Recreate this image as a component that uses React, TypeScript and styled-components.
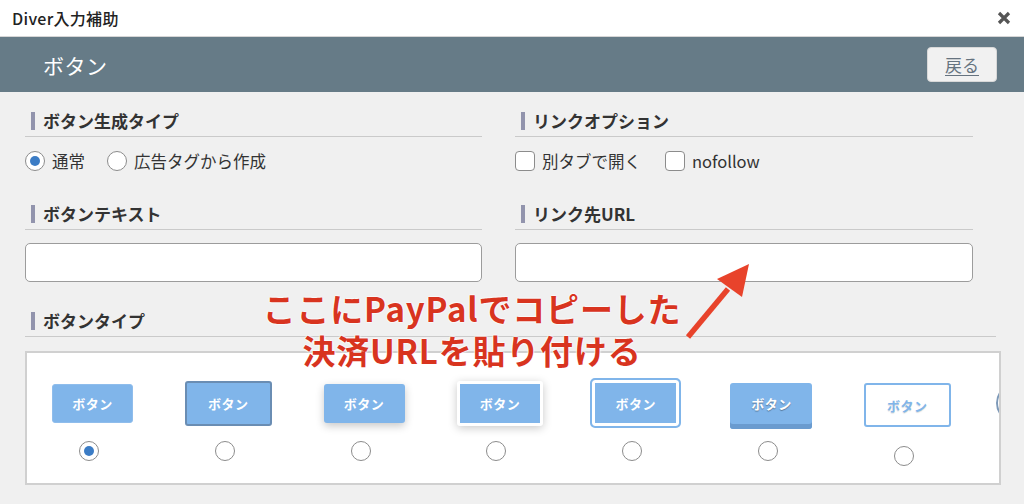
import styled, { createGlobalStyle, css } from "styled-components";

const GlobalStyle = createGlobalStyle`
  html, body, #root {
    margin: 0;
    padding: 0;
    height: 100%;
  }
  body {
    font-family: "Noto Sans CJK JP", "Noto Sans", sans-serif;
    color: #333;
    background: #f0f0f0;
  }
  * {
    box-sizing: border-box;
  }
`;

const Dialog = styled.div`
  width: 1024px;
  height: 504px;
  display: flex;
  flex-direction: column;
  overflow: hidden;
  background: #f0f0f0;
`;

const TitleBar = styled.div`
  height: 37px;
  flex-shrink: 0;
  display: flex;
  align-items: center;
  justify-content: space-between;
  padding: 0 13px 0 12px;
  background: #fff;
  border-bottom: 1px solid #d6d6d6;
`;

const Title = styled.div`
  font-size: 16px;
  font-weight: 500;
  color: #222;
  letter-spacing: 0.3px;
`;

const CloseButton = styled.div`
  width: 14px;
  height: 14px;
  display: flex;
`;

const Header = styled.div`
  height: 55px;
  flex-shrink: 0;
  display: flex;
  align-items: center;
  justify-content: space-between;
  padding: 0 27px 0 43px;
  background: #667b87;
`;

const HeaderTitle = styled.div`
  font-size: 21px;
  color: #fff;
  letter-spacing: 0.5px;
`;

const BackButton = styled.div`
  width: 70px;
  height: 35px;
  display: flex;
  align-items: center;
  justify-content: center;
  background: #f1f1f1;
  border: 1px solid #d8d8d8;
  border-radius: 4px;
  font-size: 17px;
  color: #66737f;
  text-decoration: underline;
  text-underline-offset: 3px;
`;

const Body = styled.div`
  position: relative;
  flex: 1;
  padding: 17px 23px 0 25px;
`;

const Columns = styled.div`
  display: grid;
  grid-template-columns: 457px 458px;
  column-gap: 33px;
`;

const Column = styled.div`
  display: flex;
  flex-direction: column;
`;

const Heading = styled.div<{ $top?: number; $width?: number }>`
  display: flex;
  align-items: center;
  gap: 8px;
  height: 28px;
  margin-top: ${p => p.$top ?? 0}px;
  width: ${p => (p.$width ? `${p.$width}px` : "auto")};
  padding: 0 0 3px 6px;
  border-bottom: 1px solid #cacaca;
  font-size: 17px;
  font-weight: 700;
  color: #333;
  line-height: 24px;

  &::before {
    content: "";
    width: 4px;
    height: 18px;
    background: #9294ad;
  }
`;

const OptionRow = styled.div`
  display: flex;
  align-items: center;
  height: 20px;
  margin-top: 14px;
`;

const Option = styled.label<{ $gap: number }>`
  display: flex;
  align-items: center;
  gap: 7px;
  margin-right: ${p => p.$gap}px;
  font-size: 16.5px;
  color: #333;
`;

const Radio = styled.span<{ $checked?: boolean }>`
  width: 20px;
  height: 20px;
  border-radius: 50%;
  border: 1px solid #8c8c8c;
  background: #fff;
  display: flex;
  align-items: center;
  justify-content: center;
  flex-shrink: 0;

  ${p =>
    p.$checked &&
    css`
      &::after {
        content: "";
        width: 10px;
        height: 10px;
        border-radius: 50%;
        background: #3b7cc5;
      }
    `}
`;

const Checkbox = styled.span`
  width: 20px;
  height: 20px;
  border-radius: 4px;
  border: 1px solid #8c8c8c;
  background: #fff;
  flex-shrink: 0;
`;

const TextInput = styled.input`
  display: block;
  width: 100%;
  height: 39px;
  margin-top: 13px;
  border: 1px solid #9c9c9c;
  border-radius: 5px;
  background: #fff;
  outline: none;
`;

const TypeBox = styled.div`
  margin-top: 14px;
  height: 134px;
  width: 976px;
  border: 2px solid #d0d0d0;
  background: #fff;
  display: flex;
  gap: 23.8px;
  padding: 22px 0 0 6px;
  overflow: hidden;
`;

const TypeItem = styled.div`
  width: 112px;
  flex-shrink: 0;
  display: flex;
  flex-direction: column;
  align-items: center;
`;

const ButtonSlot = styled.div`
  height: 56px;
  padding-left: 7px;
  display: flex;
  align-items: center;
  justify-content: center;
`;

type Variant =
  | "flat"
  | "border"
  | "shadow"
  | "frame"
  | "double"
  | "raised"
  | "outline"
  | "pill";

const variants: Record<Variant, ReturnType<typeof css>> = {
  flat: css`
    width: 81px;
    height: 39px;
    border: 1px solid #8fbdec;
  `,
  border: css`
    width: 87px;
    height: 45px;
    border: 2px solid #6a8db3;
  `,
  shadow: css`
    width: 81px;
    height: 39px;
    box-shadow: 0 3px 8px rgba(0, 0, 0, 0.22);
  `,
  frame: css`
    width: 86px;
    height: 45px;
    border: 3px solid #fff;
    box-shadow: 0 2px 10px rgba(0, 0, 0, 0.22);
  `,
  double: css`
    width: 91px;
    height: 50px;
    border: 2px solid #80b5ea;
    border-radius: 5px;
    box-shadow: inset 0 0 0 3px #fff;
  `,
  raised: css`
    width: 82px;
    height: 46px;
    margin-top: 6px;
    padding-bottom: 5px;
    box-shadow: inset 0 -5px 0 #6a9bcf;
    text-shadow: 0 1px 1px rgba(0, 0, 0, 0.35);
  `,
  outline: css`
    width: 87px;
    height: 44px;
    margin-top: 4px;
    background: #fff;
    border: 2px solid #80b5ea;
    color: #80b5ea;
    text-shadow: 0 1px 1px rgba(0, 0, 0, 0.15);
  `,
  pill: css`
    width: 86px;
    height: 40px;
    margin-left: -9px;
    border-radius: 20px;
    border: 2px solid #7d99b8;
    background: #fff;
  `,
};

const TypeButton = styled.div<{ $variant: Variant }>`
  display: flex;
  align-items: center;
  justify-content: center;
  background: #80b5ea;
  border-radius: 3px;
  font-size: 13px;
  font-weight: 700;
  color: #fff;
  letter-spacing: 0.5px;
  ${p => variants[p.$variant]}
`;

const TypeRadio = styled(Radio)<{ $drop?: number }>`
  margin-top: ${p => 10 + (p.$drop ?? 0)}px;
`;

const Annotation = styled.div`
  position: absolute;
  top: 195px;
  left: 222px;
  width: 500px;
  display: flex;
  flex-direction: column;
  align-items: center;
  pointer-events: none;
`;

const AnnotationLine = styled.div`
  font-size: 33px;
  line-height: 42px;
  height: 42px;
  font-weight: 700;
  color: #d8341f;
  letter-spacing: 0.8px;
  white-space: nowrap;
  text-shadow: 0 0 2px #fff, 0 0 2px #fff, 0 0 2px #fff;
`;

const Arrow = styled.svg`
  position: absolute;
  top: 163px;
  left: 680px;
  pointer-events: none;
`;

const buttonTypes: { variant: Variant; checked?: boolean; drop?: number }[] = [
  { variant: "flat", checked: true },
  { variant: "border" },
  { variant: "shadow" },
  { variant: "frame" },
  { variant: "double" },
  { variant: "raised" },
  { variant: "outline", drop: 5 },
  { variant: "pill" },
];

const App = () => {
  return (
    <>
      <GlobalStyle />
      <Dialog>
        <TitleBar>
          <Title>Diver入力補助</Title>
          <CloseButton>
            <svg width="14" height="14" viewBox="0 0 14 14">
              <path
                d="M2 2 L12 12 M12 2 L2 12"
                stroke="#555"
                strokeWidth="3.2"
                strokeLinecap="butt"
              />
            </svg>
          </CloseButton>
        </TitleBar>
        <Header>
          <HeaderTitle>ボタン</HeaderTitle>
          <BackButton>戻る</BackButton>
        </Header>
        <Body>
          <Columns>
            <Column>
              <Heading>ボタン生成タイプ</Heading>
              <OptionRow>
                <Option $gap={22}>
                  <Radio $checked />
                  通常
                </Option>
                <Option $gap={0}>
                  <Radio />
                  広告タグから作成
                </Option>
              </OptionRow>
              <Heading $top={31}>ボタンテキスト</Heading>
              <TextInput />
            </Column>
            <Column>
              <Heading>リンクオプション</Heading>
              <OptionRow>
                <Option $gap={24}>
                  <Checkbox />
                  別タブで開く
                </Option>
                <Option $gap={0}>
                  <Checkbox />
                  nofollow
                </Option>
              </OptionRow>
              <Heading $top={31}>リンク先URL</Heading>
              <TextInput />
            </Column>
          </Columns>
          <Heading $top={27} $width={971}>
            ボタンタイプ
          </Heading>
          <TypeBox>
            {buttonTypes.map((t, i) => (
              <TypeItem key={i}>
                <ButtonSlot>
                  <TypeButton $variant={t.variant}>
                    {t.variant === "pill" ? "" : "ボタン"}
                  </TypeButton>
                </ButtonSlot>
                <TypeRadio $checked={t.checked} $drop={t.drop} />
              </TypeItem>
            ))}
          </TypeBox>
          <Annotation>
            <AnnotationLine>ここにPayPalでコピーした</AnnotationLine>
            <AnnotationLine>決済URLを貼り付ける</AnnotationLine>
          </Annotation>
          <Arrow width="80" height="90" viewBox="0 0 80 90">
            <path d="M8 82 L48 34" stroke="#e8432b" strokeWidth="5.5" />
            <polygon points="69,9 37,24 62,42" fill="#e8432b" />
          </Arrow>
        </Body>
      </Dialog>
    </>
  );
};

export default App;
